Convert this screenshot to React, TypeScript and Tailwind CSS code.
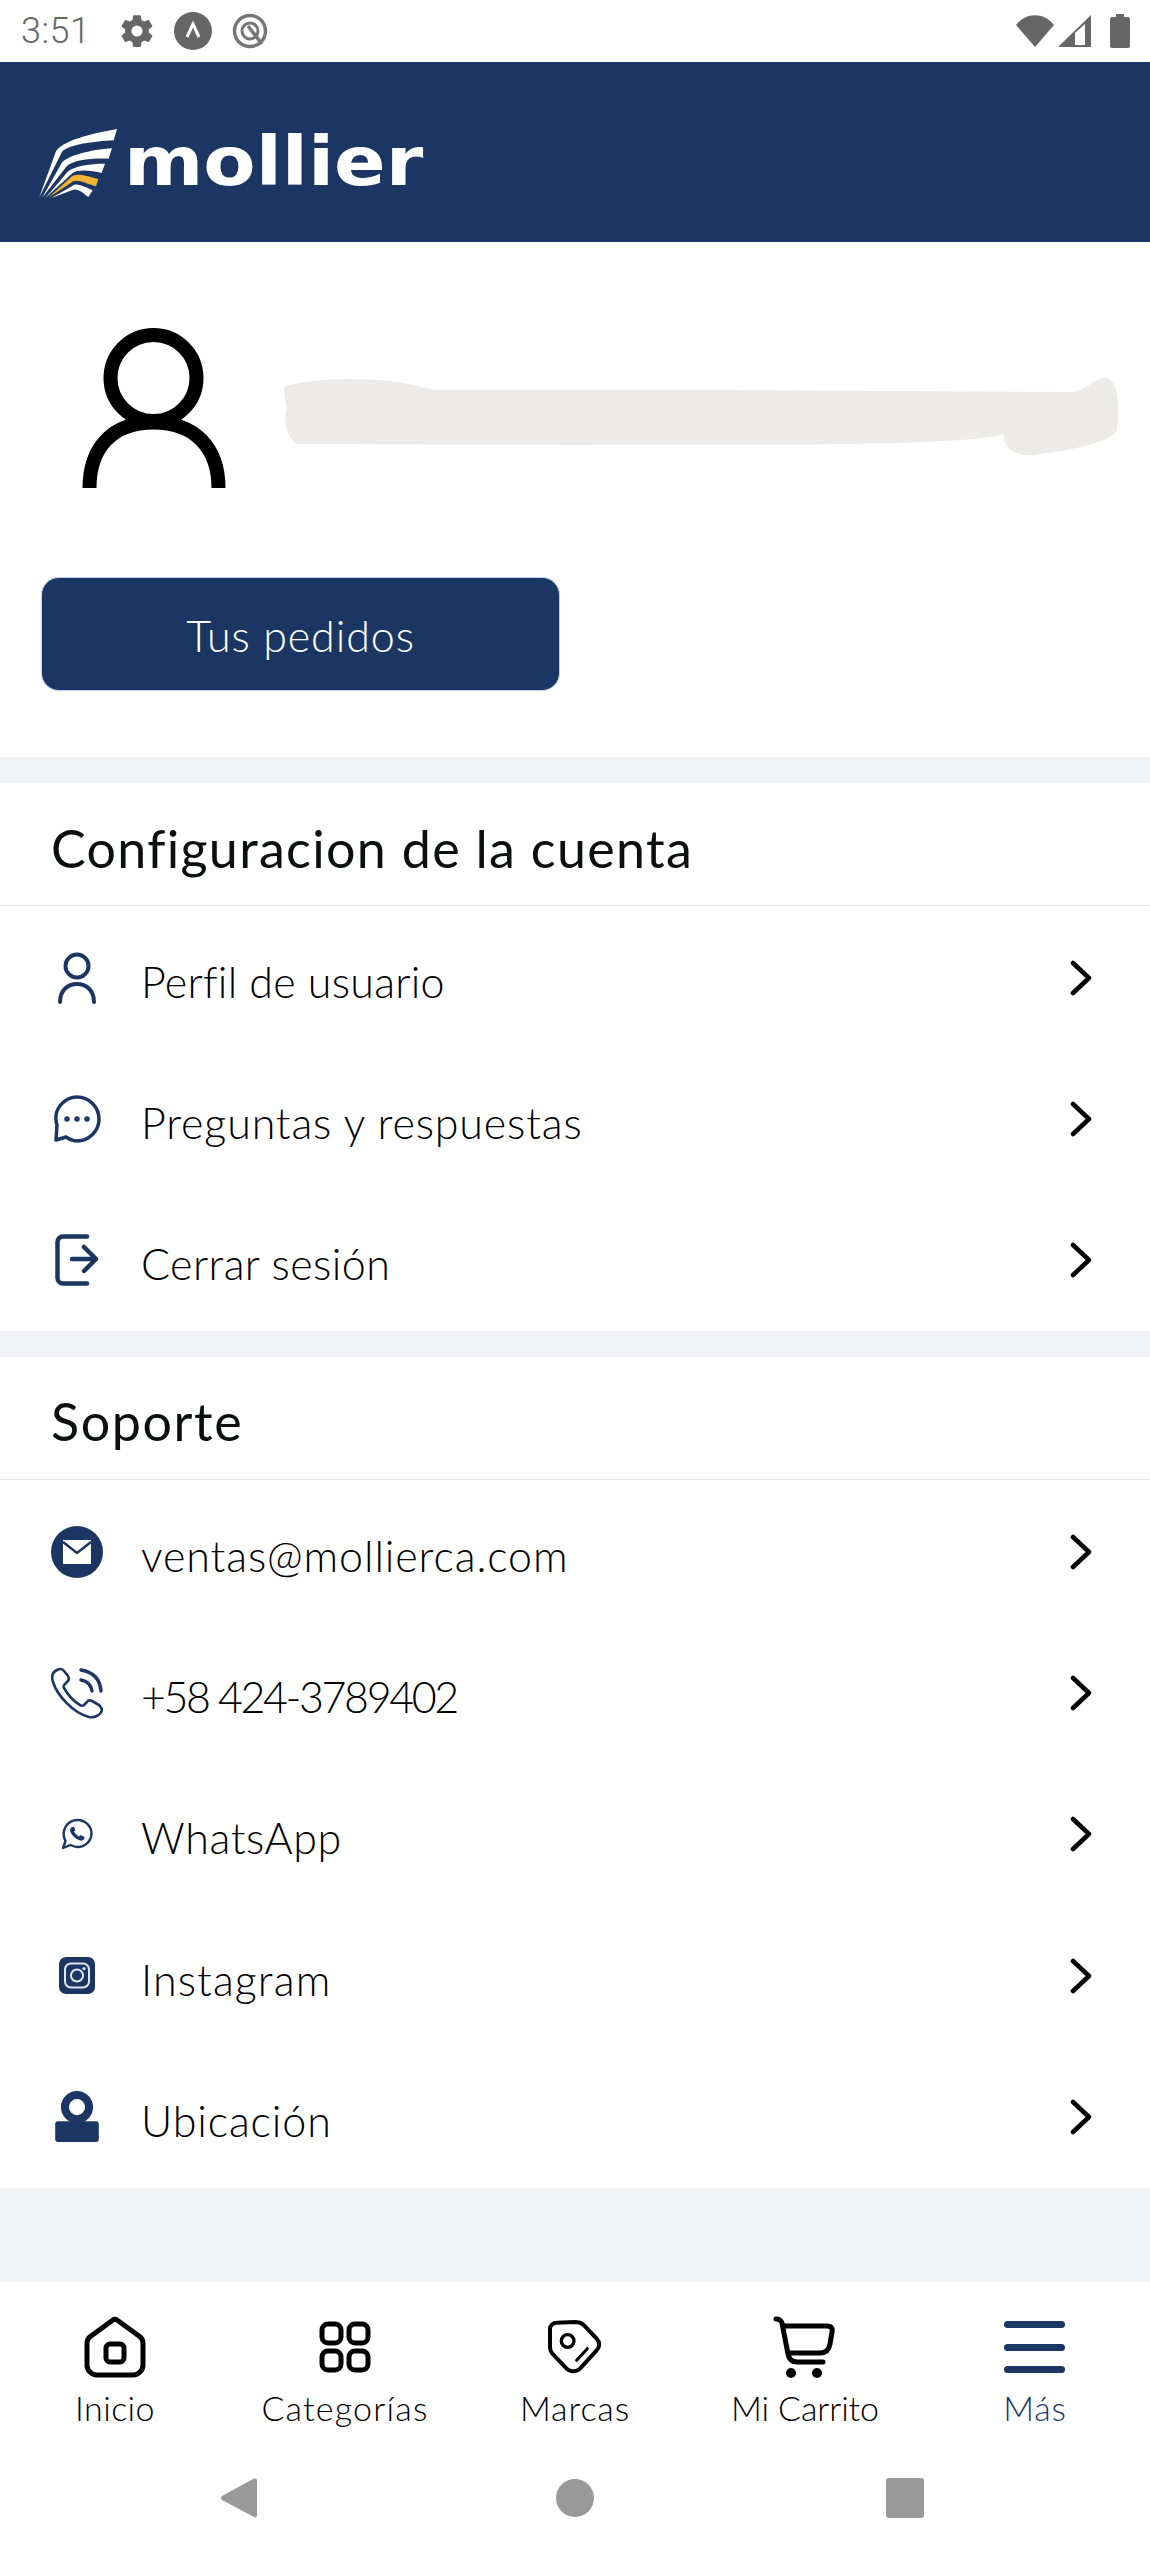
import React from "react";

const NAVY = "#1c3663";

function Chevron() {
  return (
    <svg width="24" height="36" viewBox="0 0 24 36" fill="none" className="ml-[1px] shrink-0">
      <path d="M4 3 L20 18 L4 33" stroke="#000" strokeWidth="4.5" strokeLinecap="round" strokeLinejoin="round" />
    </svg>
  );
}

function Row({ icon, label, tracking }: { icon: React.ReactNode; label: string; tracking: string }) {
  return (
    <div className="flex h-[141.33px] items-center pr-[57px]">
      <div className="flex w-[141px] shrink-0 justify-center pl-[13px]">{icon}</div>
      <div className={`flex-1 pt-[8px] text-[43px] leading-[50px] font-light text-black ${tracking}`}>{label}</div>
      <Chevron />
    </div>
  );
}

const Section = ({ title, children, tracking }: { title: string; children: React.ReactNode; tracking: string }) => (
  <section className="bg-white">
    <div className="flex h-[123px] items-center border-b border-[#e3e4e7] pl-[51px] pt-[7px]">
      <h2 className={`text-[52px] leading-[60px] font-normal text-[#0c0e12] ${tracking}`}>{title}</h2>
    </div>
    <div className="pt-[1px]">{children}</div>
  </section>
);

function StatusBar() {
  return (
    <div className="flex h-[62px] items-center bg-white pl-[21px] pr-[20px] text-[#666]">
      <span className="w-[98px] font-['Roboto',sans-serif] text-[36px] leading-[40px] font-light tracking-[0.5px]">3:51</span>
      <svg width="38" height="38" viewBox="0 0 24 24" fill="#666" className="ml-[-1px]">
        <path d="M19.4 13c.04-.33.06-.66.06-1s-.02-.67-.06-1l2.1-1.65c.2-.15.24-.42.12-.64l-2-3.46c-.12-.22-.38-.3-.6-.22l-2.5 1a7.3 7.3 0 0 0-1.7-1l-.37-2.65A.5.5 0 0 0 14 2h-4a.5.5 0 0 0-.5.42l-.37 2.65c-.6.25-1.17.59-1.7 1l-2.5-1a.5.5 0 0 0-.6.22l-2 3.46c-.13.22-.07.49.12.64L4.56 11a8 8 0 0 0 0 2l-2.1 1.65c-.2.15-.25.42-.13.64l2 3.46c.12.22.38.3.6.22l2.5-1c.53.41 1.1.75 1.7 1l.37 2.65c.04.24.25.42.5.42h4c.25 0 .46-.18.5-.42l.37-2.65c.6-.25 1.17-.59 1.7-1l2.5 1c.22.08.48 0 .6-.22l2-3.46c.12-.22.07-.49-.12-.64L19.4 13zM12 15.5a3.5 3.5 0 1 1 0-7 3.5 3.5 0 0 1 0 7z" />
      </svg>
      <svg width="38" height="38" viewBox="0 0 38 38" className="ml-[18px]">
        <circle cx="19" cy="19" r="19" fill="#666" />
        <path d="M13 25 L19 12 L25 25" fill="none" stroke="#fff" strokeWidth="3" />
      </svg>
      <svg width="36" height="36" viewBox="0 0 36 36" fill="none" className="ml-[20px]">
        <circle cx="18" cy="18" r="15.5" stroke="#777" strokeWidth="3.5" />
        <circle cx="18" cy="18" r="8" stroke="#777" strokeWidth="3" />
        <path d="M16 13 L30 31" stroke="#777" strokeWidth="3.5" />
      </svg>
      <div className="flex-1" />
      <svg width="38" height="32" viewBox="0 0 38 32" className="ml-[-2px]">
        <path d="M0 10 C10 -3 28 -3 38 10 L19 32 Z" fill="#666" />
      </svg>
      <svg width="34" height="34" viewBox="0 0 34 34" className="ml-[4px]">
        <path d="M0 33 L33 1 V33 Z" fill="#666" />
        <path d="M17 31 V19 L27 10 V31 Z" fill="#fff" />
      </svg>
      <svg width="20" height="34" viewBox="0 0 20 34" className="ml-[18px]">
        <path d="M6 0 H14 V3 H18 a2 2 0 0 1 2 2 V32 a2 2 0 0 1 -2 2 H2 a2 2 0 0 1 -2 -2 V5 a2 2 0 0 1 2 -2 H6 Z" fill="#666" />
      </svg>
    </div>
  );
}

function Header() {
  return (
    <header className="flex h-[180px] items-start bg-[#1c3663] pl-[38px] pt-[66px]">
      <svg width="80" height="70" viewBox="54 55 240 210">
        <path d="M57 265 L108 125 C125 95 210 72 291 58 L281 92 C220 95 150 105 127 125 Z" fill="#fff" />
        <path d="M66 265 L122 165 C135 138 215 120 276 116 L266 147 C215 145 160 150 140 170 Z" fill="#fff" />
        <path d="M76 265 L138 192 C155 168 215 162 255 162 L245 190 C215 182 175 178 158 190 Z" fill="#fff" />
        <path d="M84 265 L150 205 C165 185 205 200 235 208 L228 230 C200 222 175 208 160 215 Z" fill="#f2b233" />
        <path d="M94 265 L158 228 C170 218 195 232 218 242 L205 262 C190 250 175 236 160 240 Z" fill="#fff" />
      </svg>
      <span className="mt-[-6px] ml-[6px] origin-left scale-x-[1.12] font-['DejaVu_Sans',sans-serif] text-[68px] leading-[80px] font-bold text-white">
        mollier
      </span>
    </header>
  );
}

function Profile() {
  return (
    <div className="h-[515px] bg-white pl-[41px]">
      <div className="flex items-start pt-[86px]">
        <svg width="145" height="160" viewBox="0 0 145 160" fill="none" className="ml-[41px] shrink-0">
          <circle cx="71.5" cy="50" r="43" stroke="#000" strokeWidth="14" />
          <path d="M7.5 160 C7.5 120 30 94.5 71.5 94.5 C113 94.5 136.5 120 136.5 160" stroke="#000" strokeWidth="14" />
        </svg>
        <svg width="836" height="78" viewBox="0 0 836 78" className="ml-[56px] mt-[50px] shrink-0">
          <path d="M2 8 C40 -2 110 -2 150 12 L450 12 L790 14 C805 12 815 -4 826 1 C838 8 835 40 834 52 C830 64 790 72 750 77 C725 78 722 66 720 56 C680 70 400 66 300 67 L14 66 C3 60 0 40 4 30 C2 20 0 14 2 8 Z" fill="#ecebea" />
        </svg>
      </div>
      <button className="mt-[89px] flex h-[114px] w-[519px] items-center justify-center rounded-[18px] border border-[#bcd0ee] bg-[#1c3663] pt-[4px] text-[43px] font-light tracking-[0.9px] text-white">
        Tus pedidos
      </button>
    </div>
  );
}

const iconStroke = { stroke: NAVY, fill: "none", strokeLinecap: "round", strokeLinejoin: "round" } as const;

const IconUser = () => (
  <svg width="38" height="52" viewBox="0 0 38 52" {...iconStroke} strokeWidth="4">
    <circle cx="19" cy="14" r="11.5" />
    <path d="M2 50 C2 38 10 32 19 32 C28 32 36 38 36 50" />
  </svg>
);
const IconChat = () => (
  <svg width="48" height="48" viewBox="0 0 48 48" {...iconStroke} strokeWidth="3.5">
    <path d="M3 45 L4 30 C-1 14 12 2 24 2 C36 2 46 12 46 24 C46 36 36 46 24 46 C19 46 16 44 13 42 Z" />
    <circle cx="14" cy="24" r="1" fill={NAVY} />
    <circle cx="24" cy="24" r="1" fill={NAVY} />
    <circle cx="34" cy="24" r="1" fill={NAVY} />
  </svg>
);
const IconLogout = () => (
  <svg width="44" height="52" viewBox="0 0 44 52" {...iconStroke} strokeWidth="4.5">
    <path d="M32 2.5 H8 A5.5 5.5 0 0 0 2.5 8 V44 A5.5 5.5 0 0 0 8 49.5 H32" />
    <path d="M17 25 H41 M29 13 L41 25 L29 37" />
  </svg>
);
const IconMail = () => (
  <svg width="52" height="52" viewBox="0 0 52 52">
    <circle cx="26" cy="26" r="26" fill={NAVY} />
    <path d="M12 14 H40 V38 H12 Z" fill="#fff" />
    <path d="M12 16 L26 27 L40 16" fill="none" stroke={NAVY} strokeWidth="2.5" />
  </svg>
);
const IconPhone = () => (
  <svg width="52" height="52" viewBox="0 0 52 52" {...iconStroke} strokeWidth="2.6">
    <path d="M6 3 C2 5 0 9 2 15 C6 28 22 46 38 50 C44 51 50 48 51 43 C51 41 50 40 48 38 L41 34 C39 33 37 33 36 35 L33 38 C32 39 30 39 29 38 C22 34 17 28 13 21 C12 20 13 18 14 17 L17 14 C18 13 18 11 17 9 L13 4 C11 1 8 2 6 3 Z" />
    <path d="M30 3 C42 5 49 12 50 24" strokeWidth="3.4" />
    <path d="M30 13 C36 14 40 18 41 24" strokeWidth="3.4" />
  </svg>
);
const IconWhatsApp = () => (
  <svg width="32" height="32" viewBox="0 0 32 32" {...iconStroke} strokeWidth="2.4">
    <path d="M2 30 L4.5 23 C-1 12 7 2 16.5 2 C24 2 30.5 8 30.5 15.5 C30.5 23 24 29 16.5 29 C14 29 11.5 28 9.5 27 Z" />
    <path d="M11 9 C9 10 8.5 12 9.5 14 C11 18 15 21 19 22.5 C21 23 23 22 23.5 20 L23.5 19 L19.5 17 L18 18.5 C16 17.5 14 15.5 13 13.5 L14.5 12 L13 9 Z" fill={NAVY} stroke="none" />
  </svg>
);
const IconInstagram = () => (
  <svg width="36" height="37" viewBox="0 0 36 37">
    <rect width="36" height="37" rx="7" fill={NAVY} />
    <rect x="6" y="6.5" width="24" height="24" rx="6" fill="none" stroke="#dfe6f1" strokeWidth="2" />
    <circle cx="18" cy="18.5" r="6" fill="none" stroke="#dfe6f1" strokeWidth="2" />
    <circle cx="25" cy="11.5" r="1.6" fill="#dfe6f1" />
  </svg>
);
const IconLocation = () => (
  <svg width="44" height="51" viewBox="45 35 130 152">
    <circle cx="110" cy="83" r="48" fill={NAVY} />
    <rect x="45" y="125" width="130" height="62" rx="9" fill={NAVY} />
    <circle cx="110" cy="83" r="24" fill="#fff" />
  </svg>
);

const navStroke = { stroke: "#000", fill: "none", strokeLinecap: "round", strokeLinejoin: "round" } as const;

const NavHome = () => (
  <svg width="62" height="62" viewBox="0 0 62 62" {...navStroke} strokeWidth="5">
    <path d="M29 4 a3.5 3.5 0 0 1 4 0 L55 20 C58 22 59 24 59 27 V49 A10 10 0 0 1 49 59 H13 A10 10 0 0 1 3 49 V27 C3 24 4 22 7 20 Z" />
    <rect x="22" y="28" width="18" height="18" rx="4" />
  </svg>
);
const NavGrid = () => (
  <svg width="52" height="52" viewBox="0 0 52 52" {...navStroke} strokeWidth="5">
    <rect x="3" y="3" width="19" height="19" rx="6" />
    <rect x="30" y="3" width="19" height="19" rx="6" />
    <rect x="3" y="30" width="19" height="19" rx="6" />
    <rect x="30" y="30" width="19" height="19" rx="6" />
  </svg>
);
const NavTag = () => (
  <svg width="54" height="54" viewBox="59 44 162 162" {...navStroke} strokeWidth="12">
    <path d="M85 52 L140 50 C150 50 158 52 165 58 L205 100 C215 110 215 125 205 135 L155 190 C145 200 125 200 115 190 L72 145 C66 138 65 132 65 125 L65 70 C65 60 75 52 85 52 Z" />
    <circle cx="118" cy="107" r="19" strokeWidth="10" />
    <path d="M145 165 L177 130" strokeWidth="9" />
  </svg>
);
const NavCart = () => (
  <svg width="62" height="62" viewBox="0 0 62 62" fill="none" className="ml-[-3px]">
    <path d="M3 3 C6 3 8 4 9 7 L15 38 C16 43 19 46 24 46 H50" stroke="#000" strokeWidth="5" strokeLinecap="round" strokeLinejoin="round" />
    <path d="M10 10 H54 C58 10 60 12 59 16 L57 28 C56 34 53 37 47 37 H17" stroke="#000" strokeWidth="5" strokeLinecap="round" strokeLinejoin="round" />
    <circle cx="18" cy="57" r="5" fill="#000" />
    <circle cx="44" cy="57" r="5" fill="#000" />
  </svg>
);
const NavMenu = () => (
  <div className="ml-[-2px] flex h-[52px] w-[61px] flex-col justify-between">
    <div className="h-[7px] rounded-full bg-[#1c3663]" />
    <div className="h-[7px] rounded-full bg-[#1c3663]" />
    <div className="h-[7px] rounded-full bg-[#1c3663]" />
  </div>
);

function NavItem({ icon, label, active, tracking }: { icon: React.ReactNode; label: string; active?: boolean; tracking: string }) {
  return (
    <div className="flex flex-col items-center">
      <div className="flex h-[62px] items-center justify-center">{icon}</div>
      <div className={`mt-[10px] text-[34px] leading-[40px] font-light ${tracking} ${active ? "text-[#1f3566]" : "text-black"}`}>{label}</div>
    </div>
  );
}

function BottomNav() {
  return (
    <nav className="h-[278px] bg-white">
      <div className="grid grid-cols-5 pt-[34px]">
        <NavItem icon={<NavHome />} label="Inicio" tracking="tracking-[0.4px]" />
        <NavItem icon={<NavGrid />} label="Categorías" tracking="tracking-[1.2px]" />
        <NavItem icon={<NavTag />} label="Marcas" tracking="tracking-[0.9px]" />
        <NavItem icon={<NavCart />} label="Mi Carrito" tracking="tracking-[-0.1px]" />
        <NavItem icon={<NavMenu />} label="Más" tracking="tracking-[0.7px]" active />
      </div>
      <div className="mt-[49px] flex items-center pl-[221px]">
        <svg width="36" height="42" viewBox="0 0 36 42">
          <path d="M34 1.5 a2 2 0 0 1 2 2 V38.5 a2 2 0 0 1 -3 1.6 L1 23 a2.5 2.5 0 0 1 0 -4 L33 1.5 Z" fill="#999" />
        </svg>
        <div className="ml-[299px] h-[38px] w-[38px] rounded-full bg-[#999]" />
        <div className="ml-[292px] h-[40px] w-[38px] rounded-[3px] bg-[#999]" />
      </div>
    </nav>
  );
}

export default function App() {
  return (
    <div className="flex h-[2560px] w-[1150px] flex-col overflow-hidden bg-[#f2f3f6] font-['Lato',sans-serif]">
      <StatusBar />
      <Header />
      <Profile />
      <div className="h-[26px]" />
      <Section title="Configuracion de la cuenta" tracking="tracking-[1.3px]">
        <Row icon={<IconUser />} label="Perfil de usuario" tracking="tracking-[0.25px]" />
        <Row icon={<IconChat />} label="Preguntas y respuestas" tracking="tracking-[0.85px]" />
        <Row icon={<IconLogout />} label="Cerrar sesión" tracking="tracking-[0.4px]" />
      </Section>
      <div className="h-[26px]" />
      <Section title="Soporte" tracking="tracking-[1.6px]">
        <Row icon={<IconMail />} label="ventas@mollierca.com" tracking="tracking-[0.9px]" />
        <Row icon={<IconPhone />} label="+58 424-3789402" tracking="tracking-[-2.4px]" />
        <Row icon={<IconWhatsApp />} label="WhatsApp" tracking="tracking-[0.6px]" />
        <Row icon={<IconInstagram />} label="Instagram" tracking="tracking-[1.1px]" />
        <Row icon={<IconLocation />} label="Ubicación" tracking="tracking-[0.9px]" />
      </Section>
      <div className="flex-1" />
      <BottomNav />
    </div>
  );
}
